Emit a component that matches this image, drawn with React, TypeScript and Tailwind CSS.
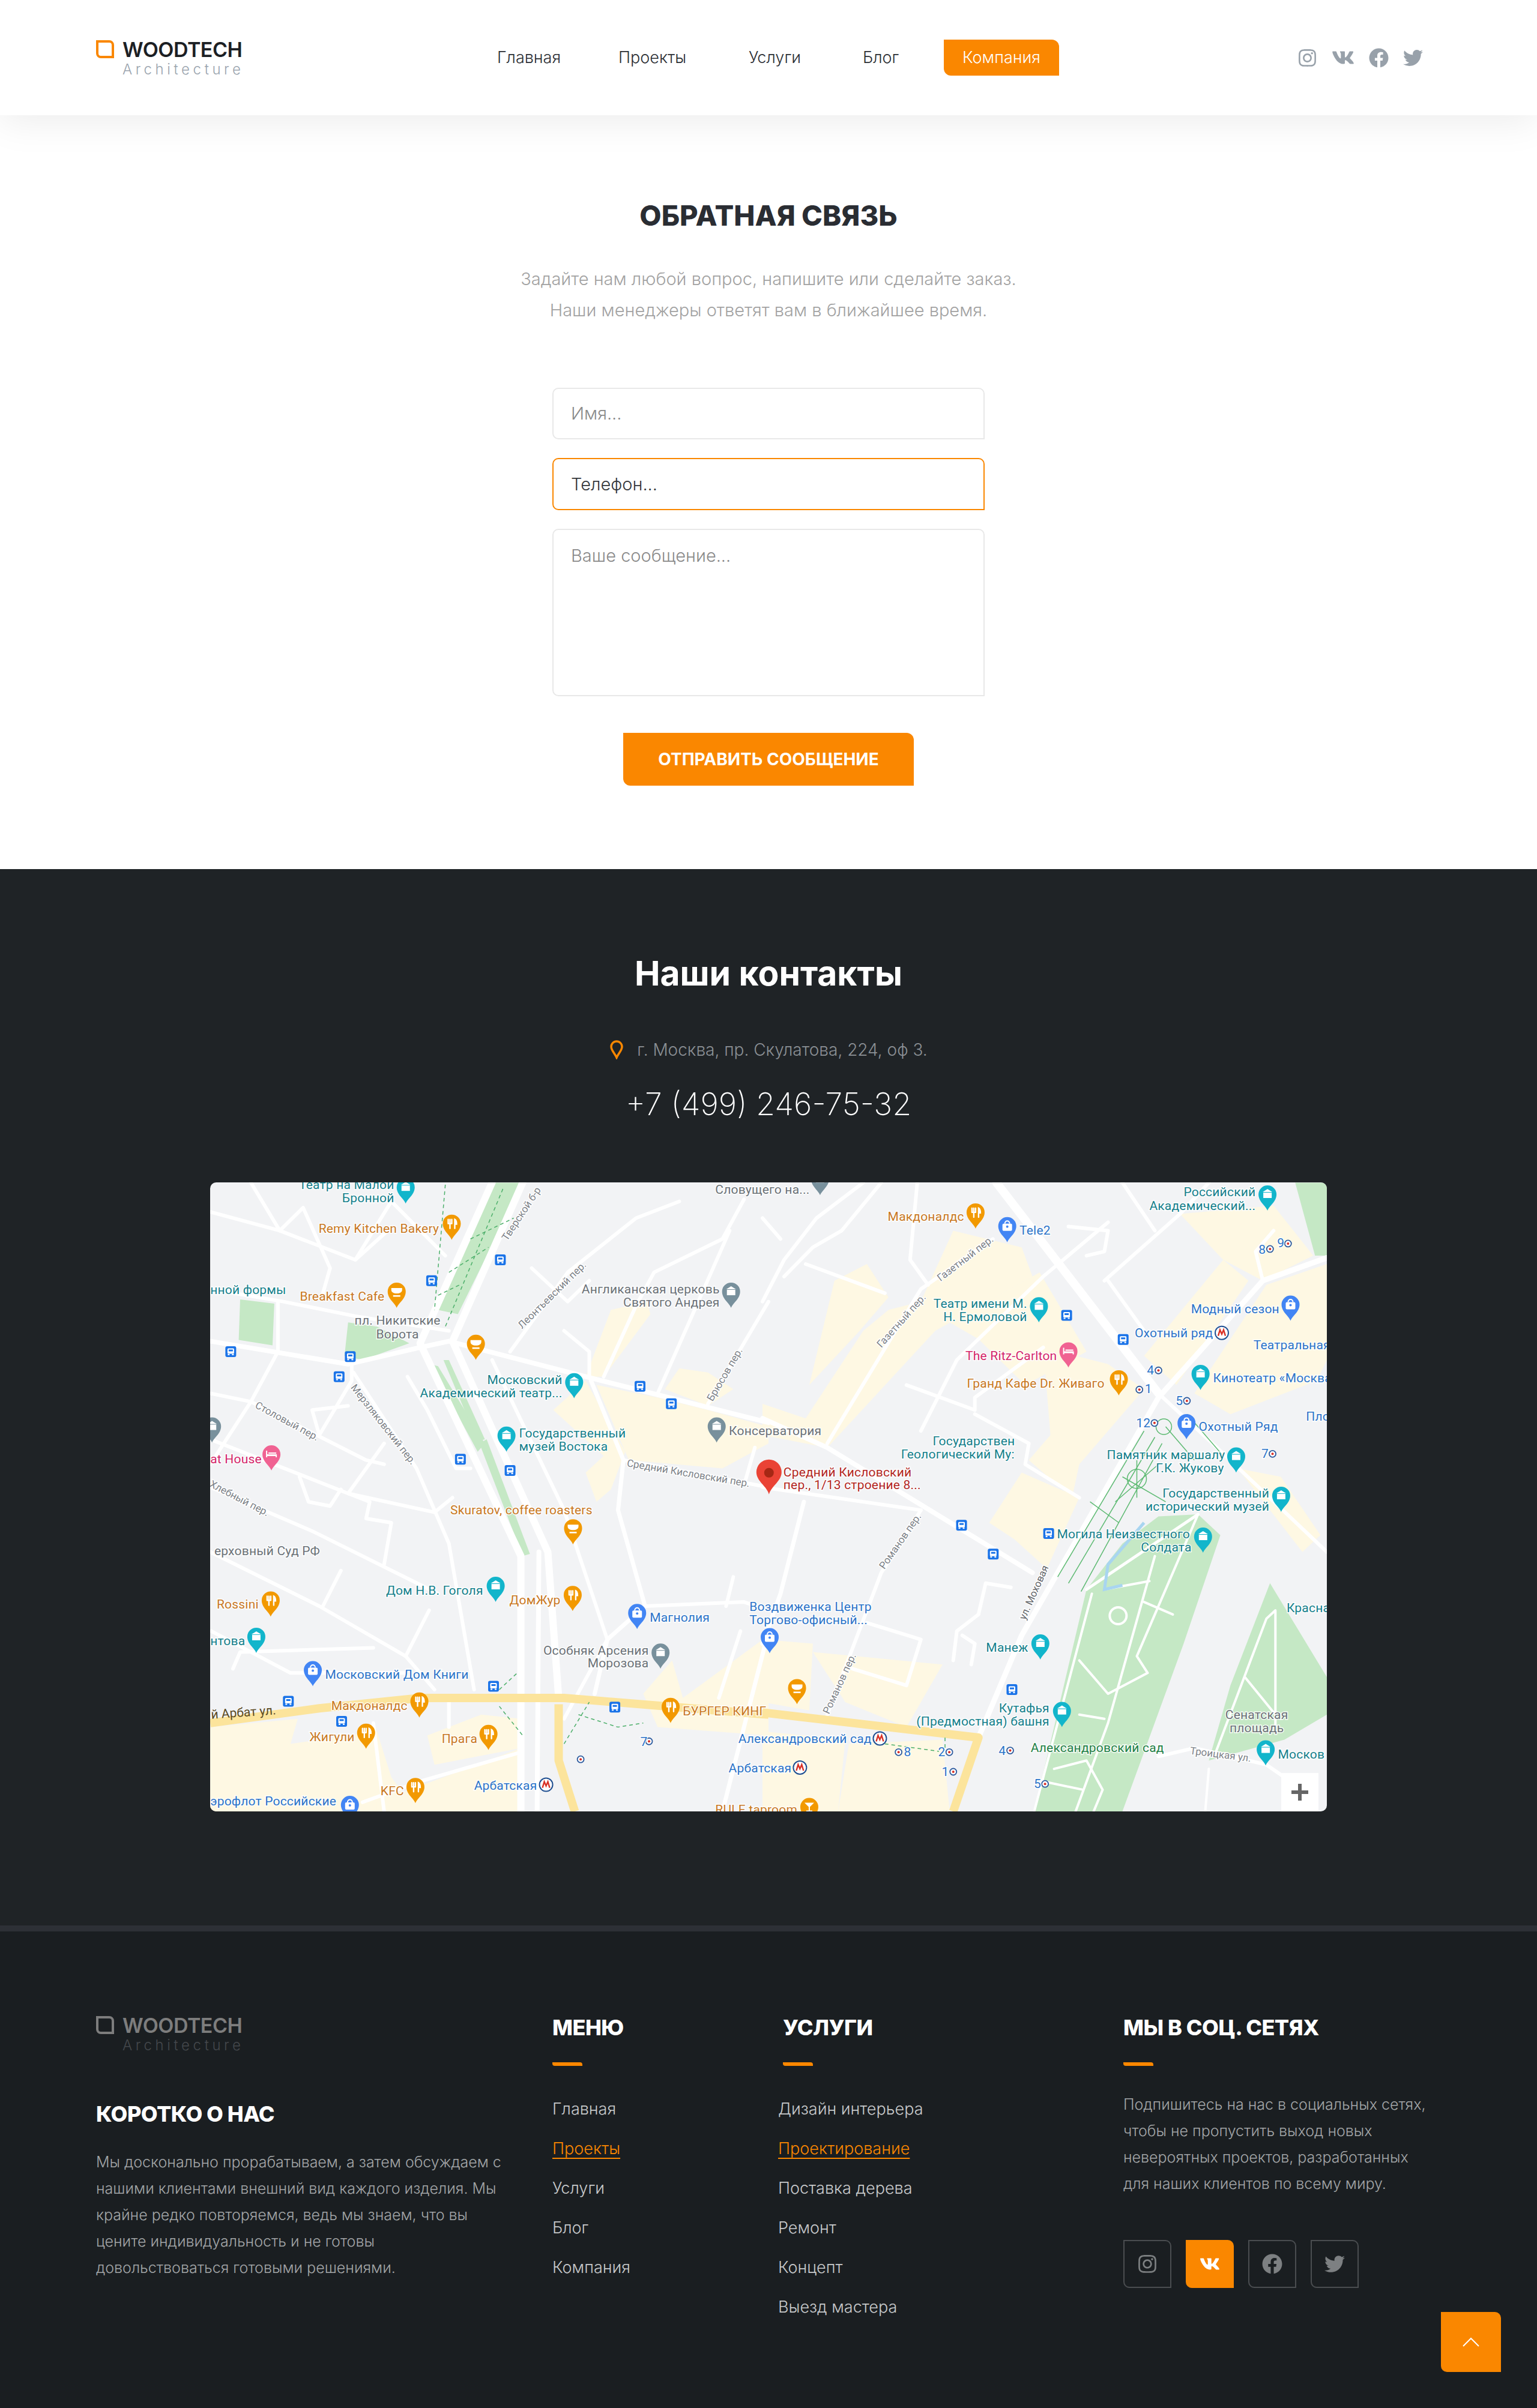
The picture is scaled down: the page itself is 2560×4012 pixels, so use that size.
import React from "react";
import { FaInstagram, FaVk, FaFacebook, FaTwitter } from "react-icons/fa";

const ORANGE = "#c9781f";
const TEAL = "#14808c";
const BLUE = "#2c74c9";
const GRAY = "#6b7177";
const PINK = "#d4266a";
const RED = "#b3261e";
const GREEN = "#1f8046";

// map numbers were read off two stretched crops, L is the left one and R the right one
type Panel = "L" | "R";
const tx = (p: Panel, x: number) => (p === "L" ? x / 1.668 - 10 : 920 + x / 1.668);
const ty = (y: number) => y / 1.4385 - 10;
const line = (p: Panel, pts: number[]) => {
  let d = "";
  for (let i = 0; i < pts.length; i += 2) {
    d += `${i === 0 ? "M" : "L"}${tx(p, pts[i]).toFixed(1)} ${ty(pts[i + 1]).toFixed(1)} `;
  }
  return d;
};

const yellowAreas: [Panel, number[]][] = [
  ["L", [1130, 320, 1230, 300, 1240, 330, 1110, 480, 1060, 480]],
  ["L", [970, 560, 1060, 490, 1170, 660, 1130, 750, 1090, 780, 1060, 710, 1110, 670]],
  ["L", [1090, 500, 1260, 530, 1400, 560, 1568, 600, 1568, 640, 1440, 700, 1180, 680]],
  ["L", [1280, 510, 1320, 460, 1400, 470, 1470, 510, 1400, 550]],
  ["L", [17, 1320, 260, 1300, 240, 1360, 480, 1330, 520, 1440, 590, 1522, 17, 1522]],
  ["L", [620, 1340, 770, 1290, 880, 1300, 880, 1370, 640, 1410]],
  ["L", [480, 1500, 880, 1370, 880, 1522, 480, 1522]],
  ["L", [1220, 1240, 1300, 1160, 1330, 1250, 1568, 1100, 1568, 1340, 1260, 1320]],
  ["R", [0, 545, 120, 580, 280, 370, 350, 320, 440, 300, 530, 130, 720, 170, 750, 240, 480, 370, 180, 650, 0, 620]],
  ["R", [200, 250, 290, 210, 350, 290, 270, 370, 130, 500]],
  ["R", [520, 350, 770, 230, 900, 420, 730, 500, 600, 390]],
  ["R", [780, 410, 960, 450, 1060, 510, 880, 690, 860, 770, 740, 680, 800, 620]],
  ["R", [630, 830, 720, 710, 880, 770, 790, 940, 700, 870]],
  ["R", [1060, 430, 1280, 200, 1350, 250, 1150, 500]],
  ["R", [1160, 90, 1420, 70, 1530, 190, 1390, 250, 1280, 200]],
  ["R", [1200, 520, 1400, 260, 1568, 210, 1568, 440, 1540, 490, 1300, 570]],
  ["R", [1320, 700, 1440, 720, 1550, 860, 1500, 900]],
  ["R", [0, 1110, 140, 1120, 130, 1280, 0, 1260]],
  ["R", [140, 1140, 500, 1170, 400, 1320, 230, 1260]],
  ["R", [0, 1330, 230, 1350, 210, 1522, 0, 1522]],
  ["R", [240, 1360, 500, 1350, 520, 1522, 210, 1522]],
];

const greenAreas: [Panel, number[]][] = [
  ["L", [790, 15, 885, 15, 705, 330, 638, 318]],
  ["L", [100, 295, 195, 305, 190, 405, 96, 392]],
  ["L", [390, 430, 400, 350, 480, 360, 570, 400, 440, 440]],
  ["L", [628, 450, 650, 455, 780, 640, 760, 660]],
  ["L", [665, 440, 680, 440, 780, 630, 760, 635]],
  ["L", [765, 640, 785, 630, 905, 905, 885, 910]],
  ["R", [1210, 810, 1272, 860, 1170, 1120, 1000, 1522, 755, 1522, 900, 990, 1000, 880, 1100, 815]],
  ["R", [1410, 975, 1568, 1200, 1568, 1290, 1450, 1350, 1240, 1400, 1300, 1220]],
  ["R", [1480, 15, 1568, 15, 1568, 190, 1535, 190]],
];

const roads: [Panel, number, number[]][] = [
  ["L", 8, [17, 395, 400, 450, 590, 412, 680, 395, 1060, 480, 1568, 590]],
  ["L", 6, [130, 15, 210, 130, 275, 75, 350, 220, 330, 280]],
  ["L", 6, [17, 85, 210, 130, 420, 200, 510, 130]],
  ["L", 6, [420, 200, 520, 60, 670, 190]],
  ["L", 6, [17, 270, 220, 300, 420, 335, 680, 370]],
  ["L", 6, [205, 300, 205, 420, 130, 540, 17, 690]],
  ["L", 6, [17, 520, 130, 540, 450, 680, 500, 690]],
  ["L", 6, [17, 630, 400, 760, 640, 805]],
  ["L", 6, [17, 745, 300, 850, 650, 1000]],
  ["L", 6, [17, 900, 320, 1030, 560, 1150, 640, 1230]],
  ["L", 6, [330, 1030, 380, 945]],
  ["L", 6, [560, 1150, 625, 1040]],
  ["L", 6, [415, 470, 590, 700, 680, 880, 750, 1230]],
  ["L", 6, [410, 450, 410, 490, 320, 620, 300, 560, 400, 550]],
  ["L", 6, [500, 640, 400, 760, 460, 780, 450, 820, 520, 830, 500, 930]],
  ["L", 6, [265, 720, 290, 780, 350, 790, 380, 750]],
  ["L", 6, [640, 805, 690, 770]],
  ["L", 6, [565, 480, 620, 560, 700, 700, 740, 700]],
  ["L", 6, [20, 1090, 240, 1190, 560, 1190]],
  ["L", 6, [80, 1180, 100, 1140, 470, 1130]],
  ["L", 7, [1075, 490, 1165, 680, 1150, 800, 1225, 1030, 1120, 1110, 1085, 1240]],
  ["L", 6, [1165, 680, 1568, 745]],
  ["L", 6, [800, 440, 1000, 800, 1120, 1110]],
  ["L", 6, [850, 420, 1010, 230, 1200, 100, 1320, 60]],
  ["L", 6, [910, 220, 1010, 300, 1070, 250]],
  ["L", 6, [1000, 370, 1070, 420, 1070, 480]],
  ["L", 6, [1110, 480, 1200, 310, 1250, 230, 1440, 150, 1500, 55]],
  ["L", 6, [1260, 520, 1460, 130]],
  ["L", 6, [1400, 545, 1568, 300]],
  ["L", 6, [1225, 1030, 1500, 1020, 1568, 1040]],
  ["L", 6, [1430, 1250, 1490, 1090]],
  ["L", 6, [1530, 650, 1500, 740]],
  ["L", 6, [1470, 960, 1450, 1030]],
  ["L", 6, [470, 1310, 500, 1522]],
  ["L", 6, [680, 1250, 680, 1320]],
  ["L", 6, [880, 1380, 600, 1450, 440, 1500]],
  ["L", 12, [800, 15, 600, 400, 880, 910, 880, 1522]],
  ["L", 12, [885, 15, 690, 395, 955, 900, 985, 1250]],
  ["L", 8, [930, 900, 925, 1522]],
  ["L", 6, [1000, 1300, 1120, 1110]],
  ["L", 7, [1440, 1522, 1568, 1090]],
  ["R", 8, [0, 580, 180, 650, 750, 950]],
  ["R", 6, [0, 745, 120, 760, 440, 800]],
  ["R", 7, [115, 780, 50, 1000, 0, 1120]],
  ["R", 6, [440, 800, 330, 950, 180, 1290]],
  ["R", 6, [250, 1180, 400, 1220, 440, 1110, 290, 1070]],
  ["R", 6, [600, 1050, 620, 975, 690, 985]],
  ["R", 6, [600, 1050, 540, 1090, 530, 1160]],
  ["R", 6, [555, 1100, 590, 1120, 580, 1170]],
  ["R", 6, [590, 570, 740, 640, 730, 690, 880, 770]],
  ["R", 6, [400, 500, 590, 560, 590, 530, 780, 410]],
  ["R", 6, [440, 610, 540, 440, 780, 240, 960, 110]],
  ["R", 6, [180, 640, 440, 270, 640, 150]],
  ["R", 6, [850, 120, 960, 130, 950, 180, 900, 190]],
  ["R", 6, [960, 250, 1060, 370]],
  ["R", 6, [950, 250, 1160, 90, 1240, 15]],
  ["R", 6, [1000, 15, 1090, 130]],
  ["R", 6, [1100, 520, 1250, 640, 1568, 900]],
  ["R", 6, [1390, 250, 1370, 180, 1420, 130]],
  ["R", 6, [0, 300, 60, 200, 150, 100, 280, 15]],
  ["R", 6, [60, 240, 140, 170, 220, 130, 330, 15]],
  ["R", 6, [120, 210, 340, 280]],
  ["R", 6, [430, 15, 410, 200, 460, 260]],
  ["R", 6, [0, 100, 50, 150]],
  ["R", 14, [650, 15, 1100, 520]],
  ["R", 9, [1568, 195, 1390, 250, 1100, 530, 720, 1100, 600, 1345]],
  ["R", 5, [900, 990, 1210, 810]],
  ["R", 4, [915, 1000, 755, 1522]],
  ["R", 4, [1090, 910, 960, 1310, 870, 1522]],
  ["R", 4, [1210, 810, 1040, 1150, 1070, 1190, 960, 1240, 880, 1160]],
  ["R", 4, [950, 990, 1075, 970]],
  ["R", 4, [1060, 1020, 1140, 1050]],
  ["R", 4, [880, 1290, 950, 1300]],
  ["R", 4, [780, 1450, 890, 1470]],
  ["R", 4, [810, 1420, 900, 1400, 945, 1470, 920, 1522]],
  ["R", 6, [1100, 1390, 1200, 1370, 1400, 1410, 1450, 1440, 1500, 1522]],
  ["R", 4, [1255, 1390, 1400, 1060, 1425, 1040, 1425, 1320]],
  ["R", 4, [1340, 1200, 1425, 1290]],
  ["R", 4, [1240, 1420, 1230, 1522]],
];

const yellowRoads: [Panel, number[]][] = [
  ["L", [17, 1310, 320, 1275, 600, 1250, 1000, 1250, 1568, 1290]],
  ["L", [985, 1265, 985, 1400, 1030, 1522]],
  ["R", [0, 1285, 300, 1315, 600, 1345, 530, 1522]],
];

const paths: [Panel, number[]][] = [
  ["L", [670, 20, 640, 320]],
  ["L", [830, 30, 670, 360]],
  ["L", [740, 150, 860, 100]],
  ["L", [680, 230, 790, 170]],
  ["L", [650, 285, 710, 260]],
  ["L", [820, 1270, 885, 1340]],
  ["L", [820, 1230, 870, 1190]],
  ["L", [1000, 1360, 1070, 1260]],
  ["L", [1040, 1290, 1150, 1320, 1220, 1310]],
  ["R", [340, 1360, 490, 1378]],
  ["R", [507, 1345, 507, 1370]],
];

const gardenLines: number[][] = [
  [820, 960, 1060, 610],
  [850, 975, 1090, 625],
  [885, 995, 1110, 640],
  [910, 780, 990, 830],
  [1000, 720, 1120, 780],
  [1180, 570, 1280, 670],
  [1120, 600, 1200, 680],
  [1040, 680, 1040, 770],
  [980, 780, 1100, 690],
];

type Label = [Panel, number, number, string, string, ("start" | "end" | "middle")?];
const labels: Label[] = [
  ["L", 528, 30, "Театр на Малой", TEAL, "end"],
  ["L", 528, 62, "Бронной", TEAL, "end"],
  ["L", 318, 135, "Remy Kitchen Bakery", ORANGE],
  ["L", 17, 282, "нной формы", TEAL],
  ["L", 266, 298, "Breakfast Cafe", ORANGE],
  ["L", 418, 356, "пл. Никитские", GRAY],
  ["L", 478, 388, "Ворота", GRAY],
  ["L", 1432, 280, "Англиканская церковь", GRAY, "end"],
  ["L", 1432, 312, "Святого Андрея", GRAY, "end"],
  ["L", 995, 498, "Московский", TEAL, "end"],
  ["L", 995, 530, "Академический театр...", TEAL, "end"],
  ["L", 875, 626, "Государственный", TEAL],
  ["L", 875, 658, "музей Востока", TEAL],
  ["L", 1458, 620, "Консерватория", GRAY],
  ["L", 17, 688, "at House", PINK],
  ["L", 684, 810, "Skuratov, coffee roasters", ORANGE],
  ["L", 322, 908, "ерховный Суд РФ", GRAY, "end"],
  ["L", 775, 1002, "Дом Н.В. Гоголя", TEAL, "end"],
  ["L", 990, 1026, "ДомЖур", ORANGE, "end"],
  ["L", 35, 1036, "Rossini", ORANGE],
  ["L", 17, 1123, "нтова", TEAL],
  ["L", 1238, 1068, "Магнолия", BLUE],
  ["L", 1515, 1042, "Воздвиженка Центр", BLUE],
  ["L", 1515, 1073, "Торгово-офисный...", BLUE],
  ["L", 1235, 1146, "Особняк Арсения", GRAY, "end"],
  ["L", 1235, 1177, "Морозова", GRAY, "end"],
  ["L", 336, 1204, "Московский Дом Книги", BLUE],
  ["L", 353, 1279, "Макдоналдс", ORANGE],
  ["L", 1330, 1292, "БУРГЕР КИНГ", ORANGE],
  ["L", 418, 1354, "Жигули", ORANGE, "end"],
  ["L", 660, 1358, "Прага", ORANGE],
  ["L", 490, 1483, "KFC", ORANGE],
  ["L", 750, 1470, "Арбатская", BLUE],
  ["L", 17, 1508, "эрофлот Российские", BLUE],
  ["L", 1420, 42, "Словущего на...", GRAY],
  ["L", 1457, 1428, "Арбатская", BLUE],
  ["L", 1484, 1358, "Александровский сад", BLUE],
  ["L", 1420, 1528, "RULE taproom", ORANGE],
  ["L", 1212, 1365, "7", BLUE],
  ["R", 560, 107, "Макдоналдс", ORANGE, "end"],
  ["R", 714, 140, "Tele2", BLUE],
  ["R", 1370, 48, "Российский", TEAL, "end"],
  ["R", 1370, 80, "Академический...", TEAL, "end"],
  ["R", 1378, 185, "8", BLUE],
  ["R", 1430, 170, "9", BLUE],
  ["R", 735, 315, "Театр имени М.", TEAL, "end"],
  ["R", 735, 347, "Н. Ермоловой", TEAL, "end"],
  ["R", 1436, 328, "Модный сезон", BLUE, "end"],
  ["R", 1034, 386, "Охотный ряд", BLUE],
  ["R", 1364, 414, "Театральная", BLUE],
  ["R", 818, 440, "The Ritz-Carlton", PINK, "end"],
  ["R", 568, 506, "Гранд Кафе Dr. Живаго", ORANGE],
  ["R", 1068, 475, "4", BLUE],
  ["R", 1062, 520, "1", BLUE],
  ["R", 1252, 494, "Кинотеатр «Москва»", BLUE],
  ["R", 1148, 548, "5", BLUE],
  ["R", 1038, 602, "12", BLUE],
  ["R", 1212, 610, "Охотный Ряд", BLUE],
  ["R", 1510, 585, "Площадь", BLUE],
  ["R", 1386, 675, "7", BLUE],
  ["R", 1285, 678, "Памятник маршалу", TEAL, "end"],
  ["R", 1282, 709, "Г.К. Жукову", TEAL, "end"],
  ["R", 1408, 770, "Государственный", TEAL, "end"],
  ["R", 1408, 801, "исторический музей", TEAL, "end"],
  ["R", 818, 868, "Могила Неизвестного", TEAL],
  ["R", 1192, 899, "Солдата", TEAL, "end"],
  ["R", 473, 645, "Государствен", TEAL],
  ["R", 385, 676, "Геологический Му:", TEAL],
  ["R", 58, 719, "Средний Кисловский", RED],
  ["R", 58, 750, "пер., 1/13 строение 8...", RED],
  ["R", 738, 1140, "Манеж", TEAL, "end"],
  ["R", 1456, 1044, "Красная", TEAL],
  ["R", 797, 1285, "Кутафья", TEAL, "end"],
  ["R", 797, 1316, "(Предмостная) башня", TEAL, "end"],
  ["R", 1373, 1300, "Сенатская", GRAY, "middle"],
  ["R", 1373, 1332, "площадь", GRAY, "middle"],
  ["R", 393, 1390, "8", BLUE],
  ["R", 488, 1390, "2", BLUE],
  ["R", 498, 1437, "1", BLUE],
  ["R", 656, 1387, "4", BLUE],
  ["R", 745, 1380, "Александровский сад", GREEN],
  ["R", 1432, 1396, "Москов", TEAL],
  ["R", 754, 1466, "5", BLUE],
];

// street names that run along a road: start and end of the line
const streets: [Panel, number, number, number, number, string][] = [
  ["L", 825, 165, 940, 15, "Тверской б-р"],
  ["L", 885, 355, 1050, 215, "Леонтьевский пер."],
  ["L", 150, 550, 310, 625, "Столовый пер."],
  ["L", 420, 510, 575, 680, "Мерзляковский пер."],
  ["L", 25, 740, 170, 805, "Хлебный пер."],
  ["L", 1410, 530, 1485, 420, "Брюсов пер."],
  ["L", 1190, 690, 1500, 735, "Средний Кисловский пер."],
  ["R", 492, 245, 636, 150, "Газетный пер."],
  ["R", 328, 403, 445, 290, "Газетный пер."],
  ["R", 335, 935, 432, 815, "Романов пер."],
  ["R", 180, 1282, 250, 1150, "Романов пер."],
  ["R", 715, 1075, 795, 920, "ул. Моховая"],
  ["R", 1195, 1378, 1350, 1395, "Троицкая ул."],
];

type PinKind = "rest" | "cafe" | "shop" | "box" | "bed" | "bar";
const PIN_ORANGE = "#f29900";
const PIN_TEAL = "#12b5cb";
const PIN_BLUE = "#4285f4";
const PIN_GRAY = "#78909c";
const PIN_PINK = "#f06292";
const pins: [Panel, number, number, string, PinKind][] = [
  ["L", 560, 65, PIN_TEAL, "box"],
  ["L", 688, 152, PIN_ORANGE, "rest"],
  ["L", 535, 315, PIN_ORANGE, "cafe"],
  ["L", 1464, 315, PIN_GRAY, "box"],
  ["L", 755, 440, PIN_ORANGE, "cafe"],
  ["L", 1028, 532, PIN_TEAL, "box"],
  ["L", 840, 660, PIN_TEAL, "box"],
  ["L", 1424, 638, PIN_GRAY, "box"],
  ["L", 187, 705, PIN_PINK, "bed"],
  ["L", 22, 638, PIN_GRAY, "box"],
  ["L", 1025, 882, PIN_ORANGE, "cafe"],
  ["L", 810, 1020, PIN_TEAL, "box"],
  ["L", 1024, 1042, PIN_ORANGE, "rest"],
  ["L", 185, 1055, PIN_ORANGE, "rest"],
  ["L", 145, 1142, PIN_TEAL, "box"],
  ["L", 1203, 1085, PIN_BLUE, "shop"],
  ["L", 1268, 1180, PIN_GRAY, "box"],
  ["L", 302, 1222, PIN_BLUE, "shop"],
  ["L", 598, 1297, PIN_ORANGE, "rest"],
  ["L", 1296, 1310, PIN_ORANGE, "rest"],
  ["L", 450, 1372, PIN_ORANGE, "rest"],
  ["L", 790, 1375, PIN_ORANGE, "rest"],
  ["L", 587, 1502, PIN_ORANGE, "rest"],
  ["L", 405, 1545, PIN_BLUE, "shop"],
  ["R", 20, 1143, PIN_BLUE, "shop"],
  ["R", 96, 1265, PIN_ORANGE, "cafe"],
  ["R", 160, 45, PIN_GRAY, "box"],
  ["R", 592, 125, PIN_ORANGE, "rest"],
  ["R", 680, 158, PIN_BLUE, "shop"],
  ["R", 1403, 82, PIN_TEAL, "box"],
  ["R", 768, 350, PIN_TEAL, "box"],
  ["R", 1467, 346, PIN_BLUE, "shop"],
  ["R", 850, 458, PIN_PINK, "bed"],
  ["R", 990, 525, PIN_ORANGE, "rest"],
  ["R", 1217, 512, PIN_TEAL, "box"],
  ["R", 1178, 630, PIN_BLUE, "shop"],
  ["R", 1316, 710, PIN_TEAL, "box"],
  ["R", 1441, 804, PIN_TEAL, "box"],
  ["R", 1224, 902, PIN_TEAL, "box"],
  ["R", 772, 1158, PIN_TEAL, "box"],
  ["R", 832, 1320, PIN_TEAL, "box"],
  ["R", 1398, 1412, PIN_TEAL, "box"],
  ["R", 130, 1550, PIN_ORANGE, "bar"],
];

const buses: [Panel, number, number][] = [
  ["L", 632, 250], ["L", 823, 200], ["L", 74, 420], ["L", 406, 432], ["L", 375, 480],
  ["L", 712, 678], ["L", 850, 705], ["L", 1211, 503], ["L", 1298, 545], ["L", 804, 1222],
  ["L", 234, 1258], ["L", 382, 1306], ["L", 1141, 1272], ["R", 845, 333], ["R", 1002, 391],
  ["R", 553, 836], ["R", 641, 905], ["R", 795, 856], ["R", 693, 1230],
];

const metros: [Panel, number, number][] = [
  ["L", 1236, 1354], ["L", 1046, 1397], ["R", 1410, 174], ["R", 1460, 161], ["R", 1100, 465],
  ["R", 1047, 511], ["R", 1179, 538], ["R", 1089, 591], ["R", 1417, 665], ["R", 378, 1380],
  ["R", 519, 1380], ["R", 530, 1427], ["R", 688, 1376], ["R", 785, 1456],
];

const bigMetros: [Panel, number, number][] = [
  ["L", 950, 1458], ["R", 1276, 375], ["R", 326, 1347], ["R", 104, 1417],
];

function PinGlyph({ kind }: { kind: PinKind }) {
  if (kind === "rest") {
    return (
      <g stroke="#fff" strokeWidth="2.4" fill="none" strokeLinecap="round">
        <path d="M-6 -34V-27M-3 -34V-19M0 -34V-27M-6 -27H0" />
        <path d="M5 -19V-34C7 -33 8 -30 8 -26H5" fill="#fff" />
      </g>
    );
  }
  if (kind === "cafe") {
    return (
      <g fill="#fff">
        <path d="M-9 -33H9V-30C9 -26 5 -24 0 -24C-5 -24 -9 -26 -9 -30Z" />
        <rect x="-6" y="-21" width="12" height="2.5" />
      </g>
    );
  }
  if (kind === "shop") {
    return (
      <g>
        <rect x="-8" y="-31" width="16" height="12" rx="2" fill="#fff" />
        <path d="M-4 -31C-4 -37 4 -37 4 -31" stroke="#fff" strokeWidth="2" fill="none" />
        <circle cx="0" cy="-26" r="2" fill={PIN_BLUE} />
      </g>
    );
  }
  if (kind === "bed") {
    return <path d="M-9 -22V-33H-7V-27H9V-22H7V-24H-7V-22ZM-5 -30H8V-28H-5Z" fill="#fff" />;
  }
  if (kind === "bar") {
    return <path d="M-8 -34H8L1 -27V-21H5V-19H-5V-21H-1V-27Z" fill="#fff" />;
  }
  return (
    <g fill="#fff">
      <path d="M-8 -31L0 -36L8 -31Z" />
      <rect x="-7" y="-30" width="14" height="9" />
    </g>
  );
}

function MapPicture() {
  return (
    <svg viewBox="0 0 1860 1048" className="block w-[1860px] h-[1048px]">
      <rect width="1860" height="1048" fill="#f2f3f5" />
      {yellowAreas.map(([p, pts], i) => (
        <path key={i} d={line(p, pts) + "Z"} fill="#fef8e3" />
      ))}
      {greenAreas.map(([p, pts], i) => (
        <path key={i} d={line(p, pts) + "Z"} fill="#c5e8c5" />
      ))}
      {roads.map(([p, w, pts], i) => (
        <path key={i} d={line(p, pts)} fill="none" stroke="#fff" strokeWidth={w} strokeLinejoin="round" strokeLinecap="round" />
      ))}
      {yellowRoads.map(([p, pts], i) => (
        <path key={i} d={line(p, pts)} fill="none" stroke="#fce49c" strokeWidth="14" strokeLinejoin="round" />
      ))}
      {paths.map(([p, pts], i) => (
        <path key={i} d={line(p, pts)} fill="none" stroke="#4caf6a" strokeWidth="1.5" strokeDasharray="6 5" />
      ))}
      {gardenLines.map((pts, i) => (
        <path key={i} d={line("R", pts)} fill="none" stroke="#5dba72" strokeWidth="1.5" />
      ))}
      <path d={line("R", [1000, 980, 950, 990, 960, 930, 1060, 830])} fill="none" stroke="#a8d5f0" strokeWidth="5" />
      <circle cx={tx("R", 1040)} cy={ty(725)} r="16" fill="none" stroke="#5dba72" strokeWidth="1.5" />
      <circle cx={tx("R", 1115)} cy={ty(600)} r="13" fill="none" stroke="#5dba72" strokeWidth="1.5" />
      <circle cx={tx("R", 988)} cy={ty(1053)} r="14" fill="#c5e8c5" stroke="#fff" strokeWidth="4" />

      {streets.map(([p, x1, y1, x2, y2, text], i) => {
        const ax = tx(p, x1);
        const ay = ty(y1);
        const bx = tx(p, x2);
        const by = ty(y2);
        const angle = (Math.atan2(by - ay, bx - ax) * 180) / Math.PI;
        return (
          <text
            key={i}
            x={(ax + bx) / 2}
            y={(ay + by) / 2 + 5}
            textAnchor="middle"
            transform={`rotate(${angle.toFixed(1)} ${(ax + bx) / 2} ${(ay + by) / 2})`}
            fontSize="17"
            fill={text === "ул. Моховая" ? "#5f6368" : "#7d8288"}
            stroke="#fff"
            strokeWidth="3"
            paintOrder="stroke"
            className="font-['Roboto',sans-serif]"
          >
            {text}
          </text>
        );
      })}
      <text
        x={tx("L", 20)}
        y={ty(1300)}
        transform={`rotate(-4 ${tx("L", 20)} ${ty(1300)})`}
        fontSize="21"
        fill="#5b4a23"
        className="font-['Roboto',sans-serif]"
      >
        й Арбат ул.
      </text>

      {buses.map(([p, x, y], i) => (
        <g key={i} transform={`translate(${tx(p, x)} ${ty(y)})`}>
          <rect x="-9" y="-9" width="18" height="18" rx="3" fill="#1a73e8" />
          <rect x="-5.5" y="-5.5" width="11" height="9" rx="1.5" fill="#fff" />
          <rect x="-3.5" y="-3.5" width="7" height="3" fill="#1a73e8" />
          <rect x="-5" y="4" width="3" height="2" fill="#fff" />
          <rect x="2" y="4" width="3" height="2" fill="#fff" />
        </g>
      ))}
      {metros.map(([p, x, y], i) => (
        <g key={i}>
          <circle cx={tx(p, x)} cy={ty(y)} r="5.5" fill="#fff" stroke="#2c5a9e" strokeWidth="1.8" />
          <circle cx={tx(p, x)} cy={ty(y)} r="2" fill="#d93025" />
        </g>
      ))}
      {bigMetros.map(([p, x, y], i) => (
        <g key={i}>
          <circle cx={tx(p, x)} cy={ty(y)} r="11" fill="#fff" stroke="#1f4f91" strokeWidth="2" />
          <path
            d={`M${tx(p, x) - 6} ${ty(y) + 5}L${tx(p, x) - 3} ${ty(y) - 5}L${tx(p, x)} ${ty(y) + 2}L${tx(p, x) + 3} ${ty(y) - 5}L${tx(p, x) + 6} ${ty(y) + 5}`}
            fill="none"
            stroke="#d93025"
            strokeWidth="2.4"
          />
        </g>
      ))}

      {pins.map(([p, x, y, color, kind], i) => (
        <g key={i} transform={`translate(${tx(p, x)} ${ty(y)})`}>
          <path d="M0 0C-3 -8 -15 -15 -15 -27A15 15 0 1 1 15 -27C15 -15 3 -8 0 0Z" fill={color} />
          <PinGlyph kind={kind} />
        </g>
      ))}

      {labels.map(([p, x, y, text, color, anchor], i) => (
        <text
          key={i}
          x={tx(p, x)}
          y={ty(y)}
          textAnchor={anchor ?? "start"}
          fontSize="21"
          letterSpacing="0.2"
          fill={color}
          stroke="#fff"
          strokeOpacity="0.85"
          strokeWidth="3"
          paintOrder="stroke"
          className="font-['Roboto',sans-serif]"
        >
          {text}
        </text>
      ))}

      <g transform={`translate(${tx("R", 18)} ${ty(762)})`}>
        <path d="M0 0C-4 -14 -21 -22 -21 -37A21 21 0 1 1 21 -37C21 -22 4 -14 0 0Z" fill="#ea4335" />
        <circle cx="0" cy="-36" r="8" fill="#a52714" />
      </g>
    </svg>
  );
}

function Logo({ dark }: { dark?: boolean }) {
  return (
    <div className="flex items-start gap-[14px]">
      <div
        className={`w-[30px] h-[30px] border-[4px] rounded-tl-none rounded-tr-[8px] rounded-bl-[8px] rounded-br-none mt-[1px] ${
          dark ? "border-[#7d7d7d]" : "border-[#fa8700]"
        }`}
      />
      <div className="flex flex-col">
        <span
          className={`text-[34px] leading-[33px] font-semibold tracking-[-0.5px] font-['Inter',sans-serif] ${
            dark ? "text-[#7d7d7d]" : "text-[#1c2024]"
          }`}
        >
          WOODTECH
        </span>
        <span
          className={`mt-[3px] text-[24px] leading-[28px] font-light tracking-[5.6px] font-['Inter',sans-serif] ${
            dark ? "text-[#44484c]" : "text-[#9aa4ae]"
          }`}
        >
          Architecture
        </span>
      </div>
    </div>
  );
}

function Header() {
  const links = [
    { label: "Главная", width: "w-[202px]" },
    { label: "Проекты", width: "w-[217px]" },
    { label: "Услуги", width: "w-[190px]" },
    { label: "Блог", width: "w-[135px]" },
  ];
  return (
    <header className="relative z-10 h-[192px] bg-white shadow-[0_10px_60px_rgba(0,0,0,0.08)] flex items-center pl-[160px] pr-[190px]">
      <div className="w-[668px] pt-[4px]">
        <Logo />
      </div>
      <nav className="flex items-center text-[#2a2e33] text-[27px] font-['Inter',sans-serif] font-light">
        {links.map((l) => (
          <a key={l.label} className={l.width}>
            {l.label}
          </a>
        ))}
        <a className="w-[192px] h-[60px] flex items-center justify-center bg-[#fa8700] text-white rounded-[0_12px_0_12px]">
          Компания
        </a>
      </nav>
      <div className="ml-auto flex items-center gap-[24px] text-[#98a1aa] text-[33px]">
        <FaInstagram />
        <FaVk className="text-[38px]" />
        <FaFacebook />
        <FaTwitter />
      </div>
    </header>
  );
}

function Feedback() {
  return (
    <section className="h-[1256px] bg-white flex flex-col items-center pt-[142px] font-['Inter',sans-serif]">
      <h1 className="text-[47px] leading-[50px] font-extrabold text-[#2a2d33]">ОБРАТНАЯ СВЯЗЬ</h1>
      <p className="mt-[55px] text-center text-[#a2a2a2] text-[29px] leading-[52px] font-light">
        Задайте нам любой вопрос, напишите или сделайте заказ.
        <br />
        Наши менеджеры ответят вам в ближайшее время.
      </p>
      <div className="mt-[103px] w-[720px] flex flex-col gap-[31px] text-[29px] font-light">
        <div className="h-[86px] border-[2px] border-[#e8e8e8] rounded-[10px_10px_0_10px] pl-[29px] flex items-center text-[#8a8a8a]">
          Имя...
        </div>
        <div className="h-[87px] border-[2px] border-[#fa8700] rounded-[10px_10px_0_10px] pl-[29px] flex items-center text-[#33363a]">
          Телефон...
        </div>
        <div className="h-[279px] border-[2px] border-[#e8e8e8] rounded-[10px_10px_0_10px] pl-[29px] pt-[21px] text-[#8a8a8a]">
          Ваше сообщение...
        </div>
      </div>
      <button className="mt-[61px] w-[484px] h-[88px] bg-[#fa8700] text-white text-[28px] font-bold rounded-[0_12px_0_12px]">
        ОТПРАВИТЬ СООБЩЕНИЕ
      </button>
    </section>
  );
}

function Contacts() {
  return (
    <section className="h-[1760px] bg-[#1f2326] flex flex-col items-center pt-[144px] font-['Inter',sans-serif]">
      <h2 className="text-[57px] leading-[60px] font-bold text-white">Наши контакты</h2>
      <div className="mt-[77px] flex items-center gap-[22px] text-[#8b9095] text-[28px] leading-[40px] font-light">
        <svg width="24" height="32" viewBox="0 0 24 32" fill="none" stroke="#fa8700" strokeWidth="3.5">
          <path d="M12 29C9 22 3 17 3 11A9 9 0 1 1 21 11C21 17 15 22 12 29Z" />
        </svg>
        г. Москва, пр. Скулатова, 224, оф 3.
      </div>
      <div className="mt-[36px] text-white text-[52px] leading-[70px] font-extralight">+7 (499) 246-75-32</div>
      <div className="relative mt-[95px] w-[1860px] h-[1048px] rounded-[10px] overflow-hidden">
        <MapPicture />
        <div className="absolute right-[14px] bottom-0 w-[62px] h-[64px] bg-white flex items-center justify-center">
          <div className="relative w-[28px] h-[28px]">
            <div className="absolute left-[11px] top-0 w-[6px] h-[28px] bg-[#666]" />
            <div className="absolute top-[11px] left-0 h-[6px] w-[28px] bg-[#666]" />
          </div>
        </div>
      </div>
    </section>
  );
}

function FooterTitle({ children, className }: { children: React.ReactNode; className?: string }) {
  return (
    <div className={className}>
      <h4 className="text-[36px] leading-[40px] font-extrabold text-white whitespace-nowrap tracking-[-0.5px]">{children}</h4>
      <div className="mt-[38px] w-[50px] h-[6px] bg-[#fa8700] rounded-[0_4px_0_4px]" />
    </div>
  );
}

function FooterLinks({ items, active }: { items: string[]; active: string }) {
  return (
    <ul className="mt-[52px] flex flex-col gap-[26px] text-[27px] leading-[40px] font-light text-[#c8cacc]">
      {items.map((t) => (
        <li key={t}>
          <a className={t === active ? "text-[#fa8700] underline underline-offset-[6px] decoration-2" : ""}>{t}</a>
        </li>
      ))}
    </ul>
  );
}

function Footer() {
  const social = [FaInstagram, FaVk, FaFacebook, FaTwitter];
  return (
    <footer className="relative h-[804px] bg-[#1a1e21] border-t-[10px] border-[#2d3036] font-['Inter',sans-serif]">
      <div className="flex pl-[160px] pt-[140px]">
        <div className="w-[760px]">
          <Logo dark />
          <h4 className="mt-[78px] text-[36px] leading-[44px] font-extrabold text-white tracking-[-0.5px]">КОРОТКО О НАС</h4>
          <p className="mt-[36px] w-[700px] text-[25px] leading-[44px] font-light text-[#a3a6a8]">
            Мы досконально прорабатываем, а затем обсуждаем с
            <br />
            нашими клиентами внешний вид каждого изделия. Мы
            <br />
            крайне редко повторяемся, ведь мы знаем, что вы
            <br />
            цените индивидуальность и не готовы
            <br />
            довольствоваться готовыми решениями.
          </p>
        </div>
        <div className="w-[376px]">
          <FooterTitle>МЕНЮ</FooterTitle>
          <FooterLinks items={["Главная", "Проекты", "Услуги", "Блог", "Компания"]} active="Проекты" />
        </div>
        <div className="w-[575px]">
          <FooterTitle className="ml-[8px]">УСЛУГИ</FooterTitle>
          <FooterLinks
            items={["Дизайн интерьера", "Проектирование", "Поставка дерева", "Ремонт", "Концепт", "Выезд мастера"]}
            active="Проектирование"
          />
        </div>
        <div className="w-[520px]">
          <FooterTitle>МЫ В СОЦ. СЕТЯХ</FooterTitle>
          <p className="mt-[42px] text-[25px] leading-[44px] font-light text-[#a3a6a8]">
            Подпишитесь на нас в социальных сетях,
            <br />
            чтобы не пропустить выход новых
            <br />
            невероятных проектов, разработанных
            <br />
            для наших клиентов по всему миру.
          </p>
          <div className="mt-[72px] flex gap-[24px]">
            {social.map((Icon, i) => (
              <div
                key={i}
                className={`w-[80px] h-[80px] flex items-center justify-center text-[34px] rounded-[0_10px_0_10px] ${
                  i === 1 ? "bg-[#fa8700] text-white" : "border-[2px] border-[#4a4d50] text-[#7d8082]"
                }`}
              >
                <Icon />
              </div>
            ))}
          </div>
        </div>
      </div>
      <div className="absolute left-[2400px] top-[634px] w-[100px] h-[100px] bg-[#fa8700] rounded-[0_10px_0_10px] flex items-center justify-center">
        <svg width="28" height="16" viewBox="0 0 28 16" fill="none" stroke="#fff" strokeWidth="2">
          <path d="M1 15L14 2L27 15" />
        </svg>
      </div>
    </footer>
  );
}

export default function App() {
  return (
    <div className="w-[2560px] bg-white">
      <Header />
      <Feedback />
      <Contacts />
      <Footer />
    </div>
  );
}
